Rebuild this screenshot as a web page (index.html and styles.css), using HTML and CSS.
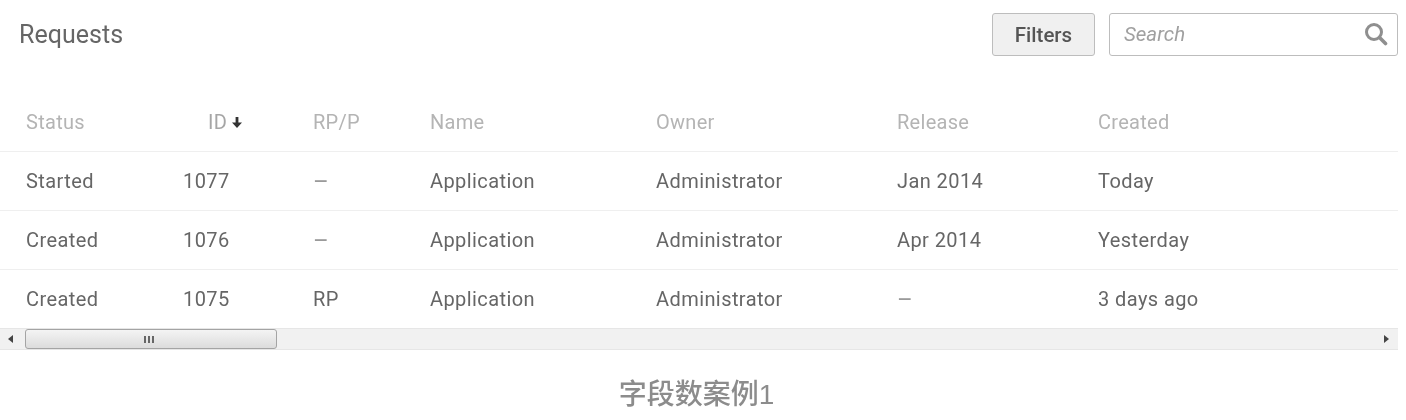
FILE: index.html
```
<!DOCTYPE html>
<html lang="en">
<head>
<meta charset="utf-8">
<title>Requests</title>
<link rel="stylesheet" href="styles.css">
</head>
<body>
<main class="shot">
  <header class="topbar">
    <h1 class="title">Requests</h1>
    <div class="tools">
      <button class="filters" type="button">Filters</button>
      <div class="search">
        <span class="search-text">Search</span>
        <svg class="search-icon" viewBox="0 0 24 24" width="24" height="24" aria-hidden="true">
          <circle cx="10" cy="10" r="7.5" fill="none" stroke="#8f8f8f" stroke-width="3"/>
          <path d="M15.500 15.500l6 6" stroke="#8f8f8f" stroke-width="3.6" stroke-linecap="round"/>
        </svg>
      </div>
    </div>
  </header>
  <section class="table">
    <div class="row head">
      <span>Status</span>
      <span class="id-head">ID <svg class="sort" viewBox="0 0 10 11" width="10" height="11" aria-hidden="true"><path d="M3.6 0h2.8v5.5H10L5 11 0 5.500h3.600z" fill="#333"/></svg></span>
      <span>RP/P</span><span>Name</span><span>Owner</span><span>Release</span><span>Created</span>
    </div>
    <div class="row">
      <span>Started</span><span>1077</span><span class="dim">–</span><span>Application</span><span>Administrator</span><span>Jan 2014</span><span>Today</span>
    </div>
    <div class="row">
      <span>Created</span><span>1076</span><span class="dim">–</span><span>Application</span><span>Administrator</span><span>Apr 2014</span><span>Yesterday</span>
    </div>
    <div class="row last">
      <span>Created</span><span>1075</span><span>RP</span><span>Application</span><span>Administrator</span><span class="dim">–</span><span>3 days ago</span>
    </div>
    <div class="scrollbar">
      <span class="arrow left"></span>
      <div class="thumb"><span class="grip"></span></div>
      <span class="arrow right"></span>
    </div>
  </section>
  <p class="caption">字段数案例1</p>
</main>
</body>
</html>
```
FILE: styles.css
```
* { box-sizing: border-box; }
html, body { margin: 0; background: #fff; }
body { width: 1406px; height: 420px; overflow: hidden; }
.shot {
  width: 1406px;
  height: 420px;
  font-family: Roboto, "Noto Sans CJK SC", sans-serif;
  color: #666;
  filter: blur(0.7px);
}
.topbar {
  height: 92px;
  padding: 13px 8px 0 19px;
  display: flex;
  justify-content: space-between;
  align-items: flex-start;
}
.title {
  margin: 0;
  padding-top: 7px;
  font-size: 25px;
  line-height: 30px;
  font-weight: 400;
  letter-spacing: 0.03px;
  color: #666;
}
.tools { display: flex; gap: 14px; }
.filters {
  width: 103px;
  height: 43px;
  background: #f0f0f0;
  border: 1px solid #bdbdbd;
  border-radius: 3px;
  font: 500 20.5px Roboto, sans-serif;
  color: #555;
  padding: 0;
}
.search {
  width: 289px;
  height: 43px;
  border: 1px solid #bdbdbd;
  border-radius: 3px;
  display: flex;
  align-items: center;
  justify-content: space-between;
  padding: 0 9px 1px 14px;
  background: #fff;
}
.search-text { font-size: 20.5px; font-style: italic; color: #a0a0a0; }
.row {
  height: 59px;
  width: 1398px;
  display: grid;
  grid-template-columns: 157px 130px 117px 226px 241px 201px 1fr;
  align-items: center;
  padding-left: 26px;
  border-bottom: 1px solid #efefef;
  font-size: 20px;
  letter-spacing: 0.42px;
  color: #666;
}
.row.head { height: 60px; letter-spacing: 0.28px; color: #b4b4b4; }
.row.last { border-bottom: 0; height: 58px; }
.head > span { padding-top: 1px; }
.id-head { margin-left: 25px; color: #a6a6a6; display: flex; align-items: center; gap: 5px; }
.sort { margin-top: 1px; }
.dim { color: #9a9a9a; font-size: 24px; line-height: 24px; padding-top: 1px; }
.scrollbar {
  width: 1398px;
  height: 22px;
  background: #f1f1f1;
  border-top: 1px solid #e6e6e6;
  border-bottom: 1px solid #e6e6e6;
  display: flex;
  align-items: center;
  padding: 0 8px;
}
.arrow { width: 0; height: 0; border-top: 4px solid transparent; border-bottom: 4px solid transparent; }
.arrow.left { border-right: 5px solid #444; }
.arrow.right { border-left: 5px solid #444; margin-left: auto; margin-right: 1px; }
.thumb {
  width: 252px;
  height: 20px;
  margin-left: 12px;
  border: 1px solid #a4a4a4;
  border-radius: 3px;
  background: linear-gradient(#f4f4f4, #dcdcdc);
  display: flex;
  justify-content: center;
  align-items: center;
}
.grip {
  width: 11px;
  height: 7px;
  margin-right: 4px;
  background: repeating-linear-gradient(90deg, #666 0 2px, transparent 2px 4px);
}
.caption {
  margin: 27px 13px 0 0;
  text-align: center;
  font-family: "Liberation Sans", "Noto Sans CJK SC", sans-serif;
  font-size: 28px;
  font-weight: 500;
  line-height: 36px;
  color: #8c8c8c;
}
```
